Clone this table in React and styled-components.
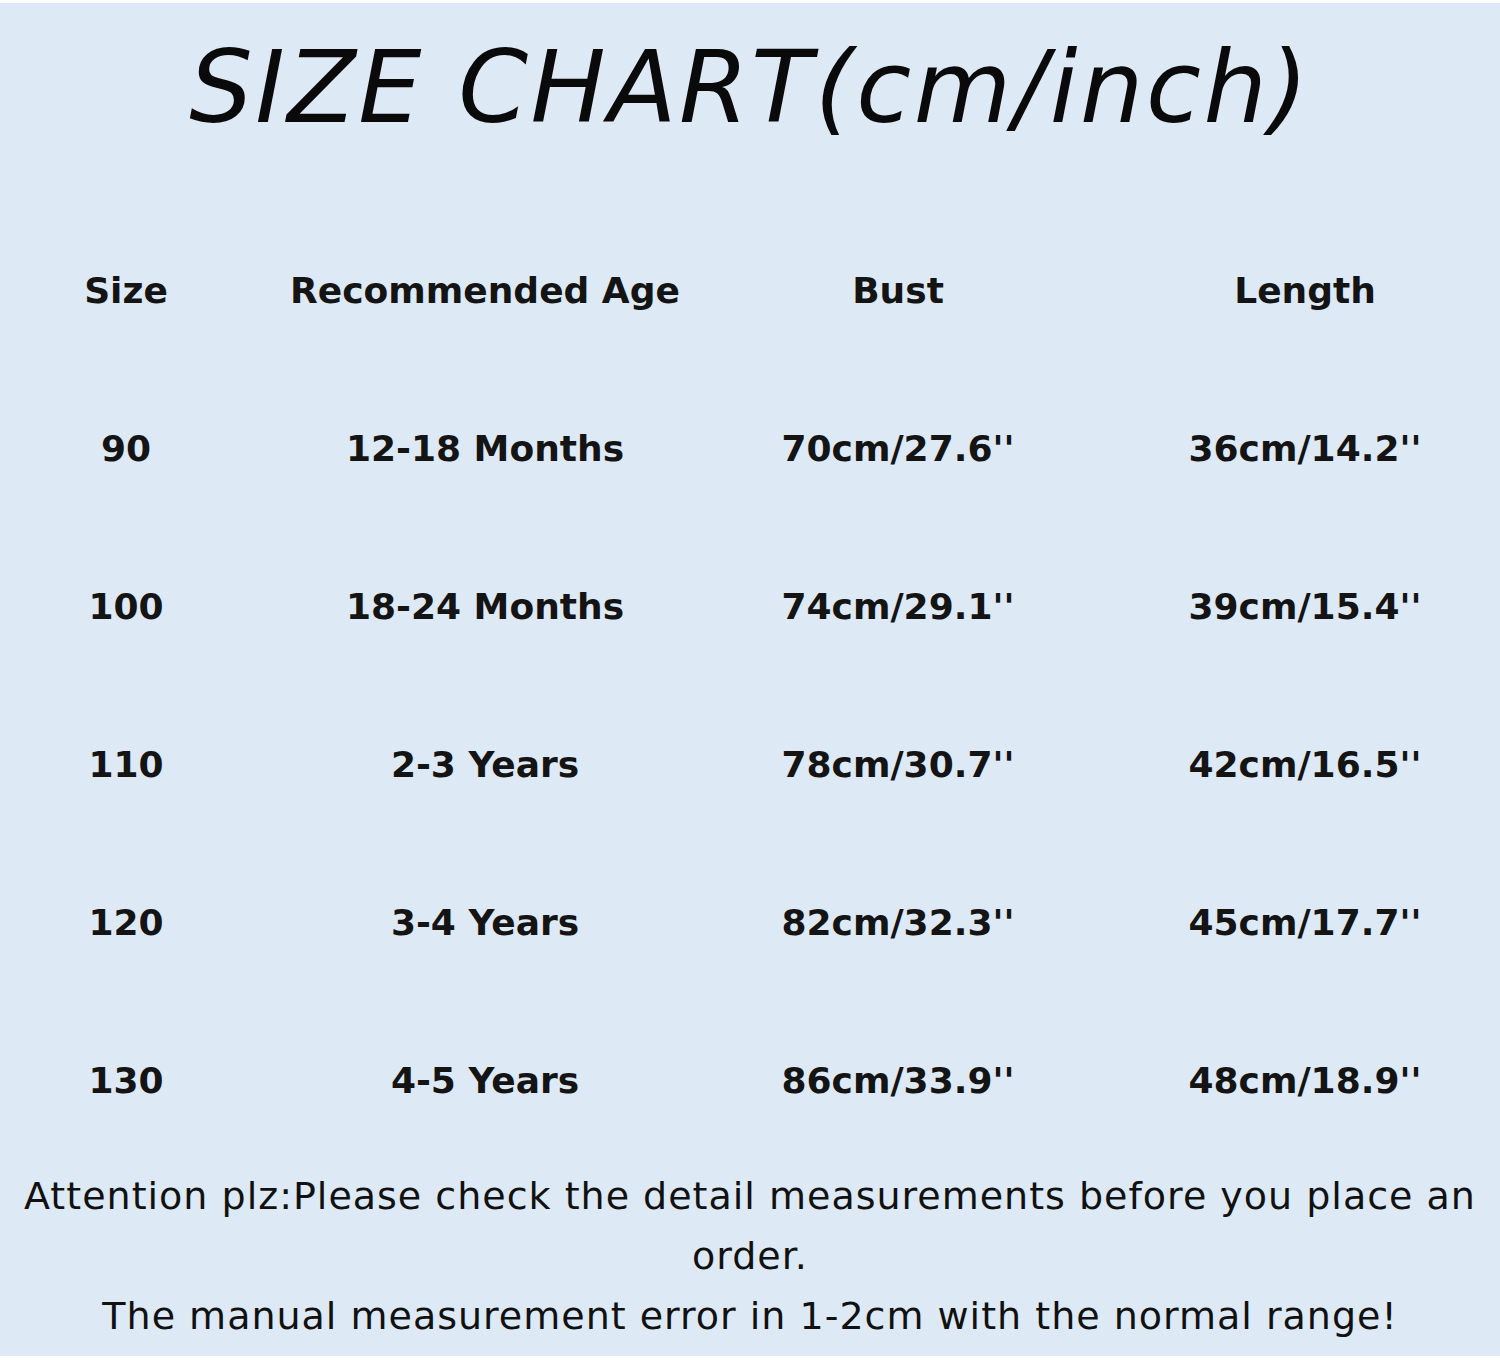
import React from 'react';
import styled, { createGlobalStyle } from 'styled-components';

const rows = [
  { size: '90', age: '12-18 Months', bust: "70cm/27.6''", length: "36cm/14.2''" },
  { size: '100', age: '18-24 Months', bust: "74cm/29.1''", length: "39cm/15.4''" },
  { size: '110', age: '2-3 Years', bust: "78cm/30.7''", length: "42cm/16.5''" },
  { size: '120', age: '3-4 Years', bust: "82cm/32.3''", length: "45cm/17.7''" },
  { size: '130', age: '4-5 Years', bust: "86cm/33.9''", length: "48cm/18.9''" },
];

const GlobalStyle = createGlobalStyle`
  body {
    margin: 0;
    background: #ffffff;
  }
`;

const App = () => (
  <>
    <GlobalStyle />
    <Panel>
      <Title>SIZE CHART(cm/inch)</Title>
      <Table>
        <Head>Size</Head>
        <Head>Recommended Age</Head>
        <Head>Bust</Head>
        <Head $last>Length</Head>
        {rows.map(({ size, age, bust, length }) => (
          <React.Fragment key={size}>
            <Cell>{size}</Cell>
            <Cell>{age}</Cell>
            <Cell>{bust}</Cell>
            <Cell $last>{length}</Cell>
          </React.Fragment>
        ))}
      </Table>
      <Note>
        <Line>Attention plz:Please check the detail measurements before you place an</Line>
        <Line>order.</Line>
        <Line>The manual measurement error in 1-2cm with the normal range!</Line>
      </Note>
    </Panel>
  </>
);

const Panel = styled.div`
  margin-top: 3px;
  width: 1500px;
  height: 1353px;
  background: #dde9f5;
  display: flex;
  flex-direction: column;
  color: #111111;
`;

const Title = styled.div`
  height: 208px;
  padding-top: 30px;
  box-sizing: border-box;
  text-align: center;
  font-family: 'DejaVu Sans', sans-serif;
  font-style: italic;
  font-weight: 400;
  font-size: 100px;
  line-height: 110px;
  letter-spacing: 2.5px;
  color: #0a0a0a;
`;

const Table = styled.div`
  display: grid;
  grid-template-columns: 252px 466px 360px 422px;
  grid-auto-rows: 158px;
`;

const cellBase = `
  display: flex;
  align-items: center;
  justify-content: center;
  font-family: 'DejaVu Sans', sans-serif;
  font-weight: 700;
  color: #141414;
  white-space: nowrap;
`;

const Head = styled.div`
  ${cellBase}
  font-size: 36px;
  padding-left: ${({ $last }) => ($last ? '32px' : '0')};
`;

const Cell = styled.div`
  ${cellBase}
  font-size: 36px;
  padding-left: ${({ $last }) => ($last ? '32px' : '0')};
`;

const Note = styled.div`
  padding-top: 7px;
  display: flex;
  flex-direction: column;
  align-items: center;
`;

const Line = styled.div`
  font-family: 'DejaVu Sans', sans-serif;
  font-size: 38px;
  line-height: 60px;
  letter-spacing: 1px;
  color: #111111;
  white-space: nowrap;
`;

export default App;
